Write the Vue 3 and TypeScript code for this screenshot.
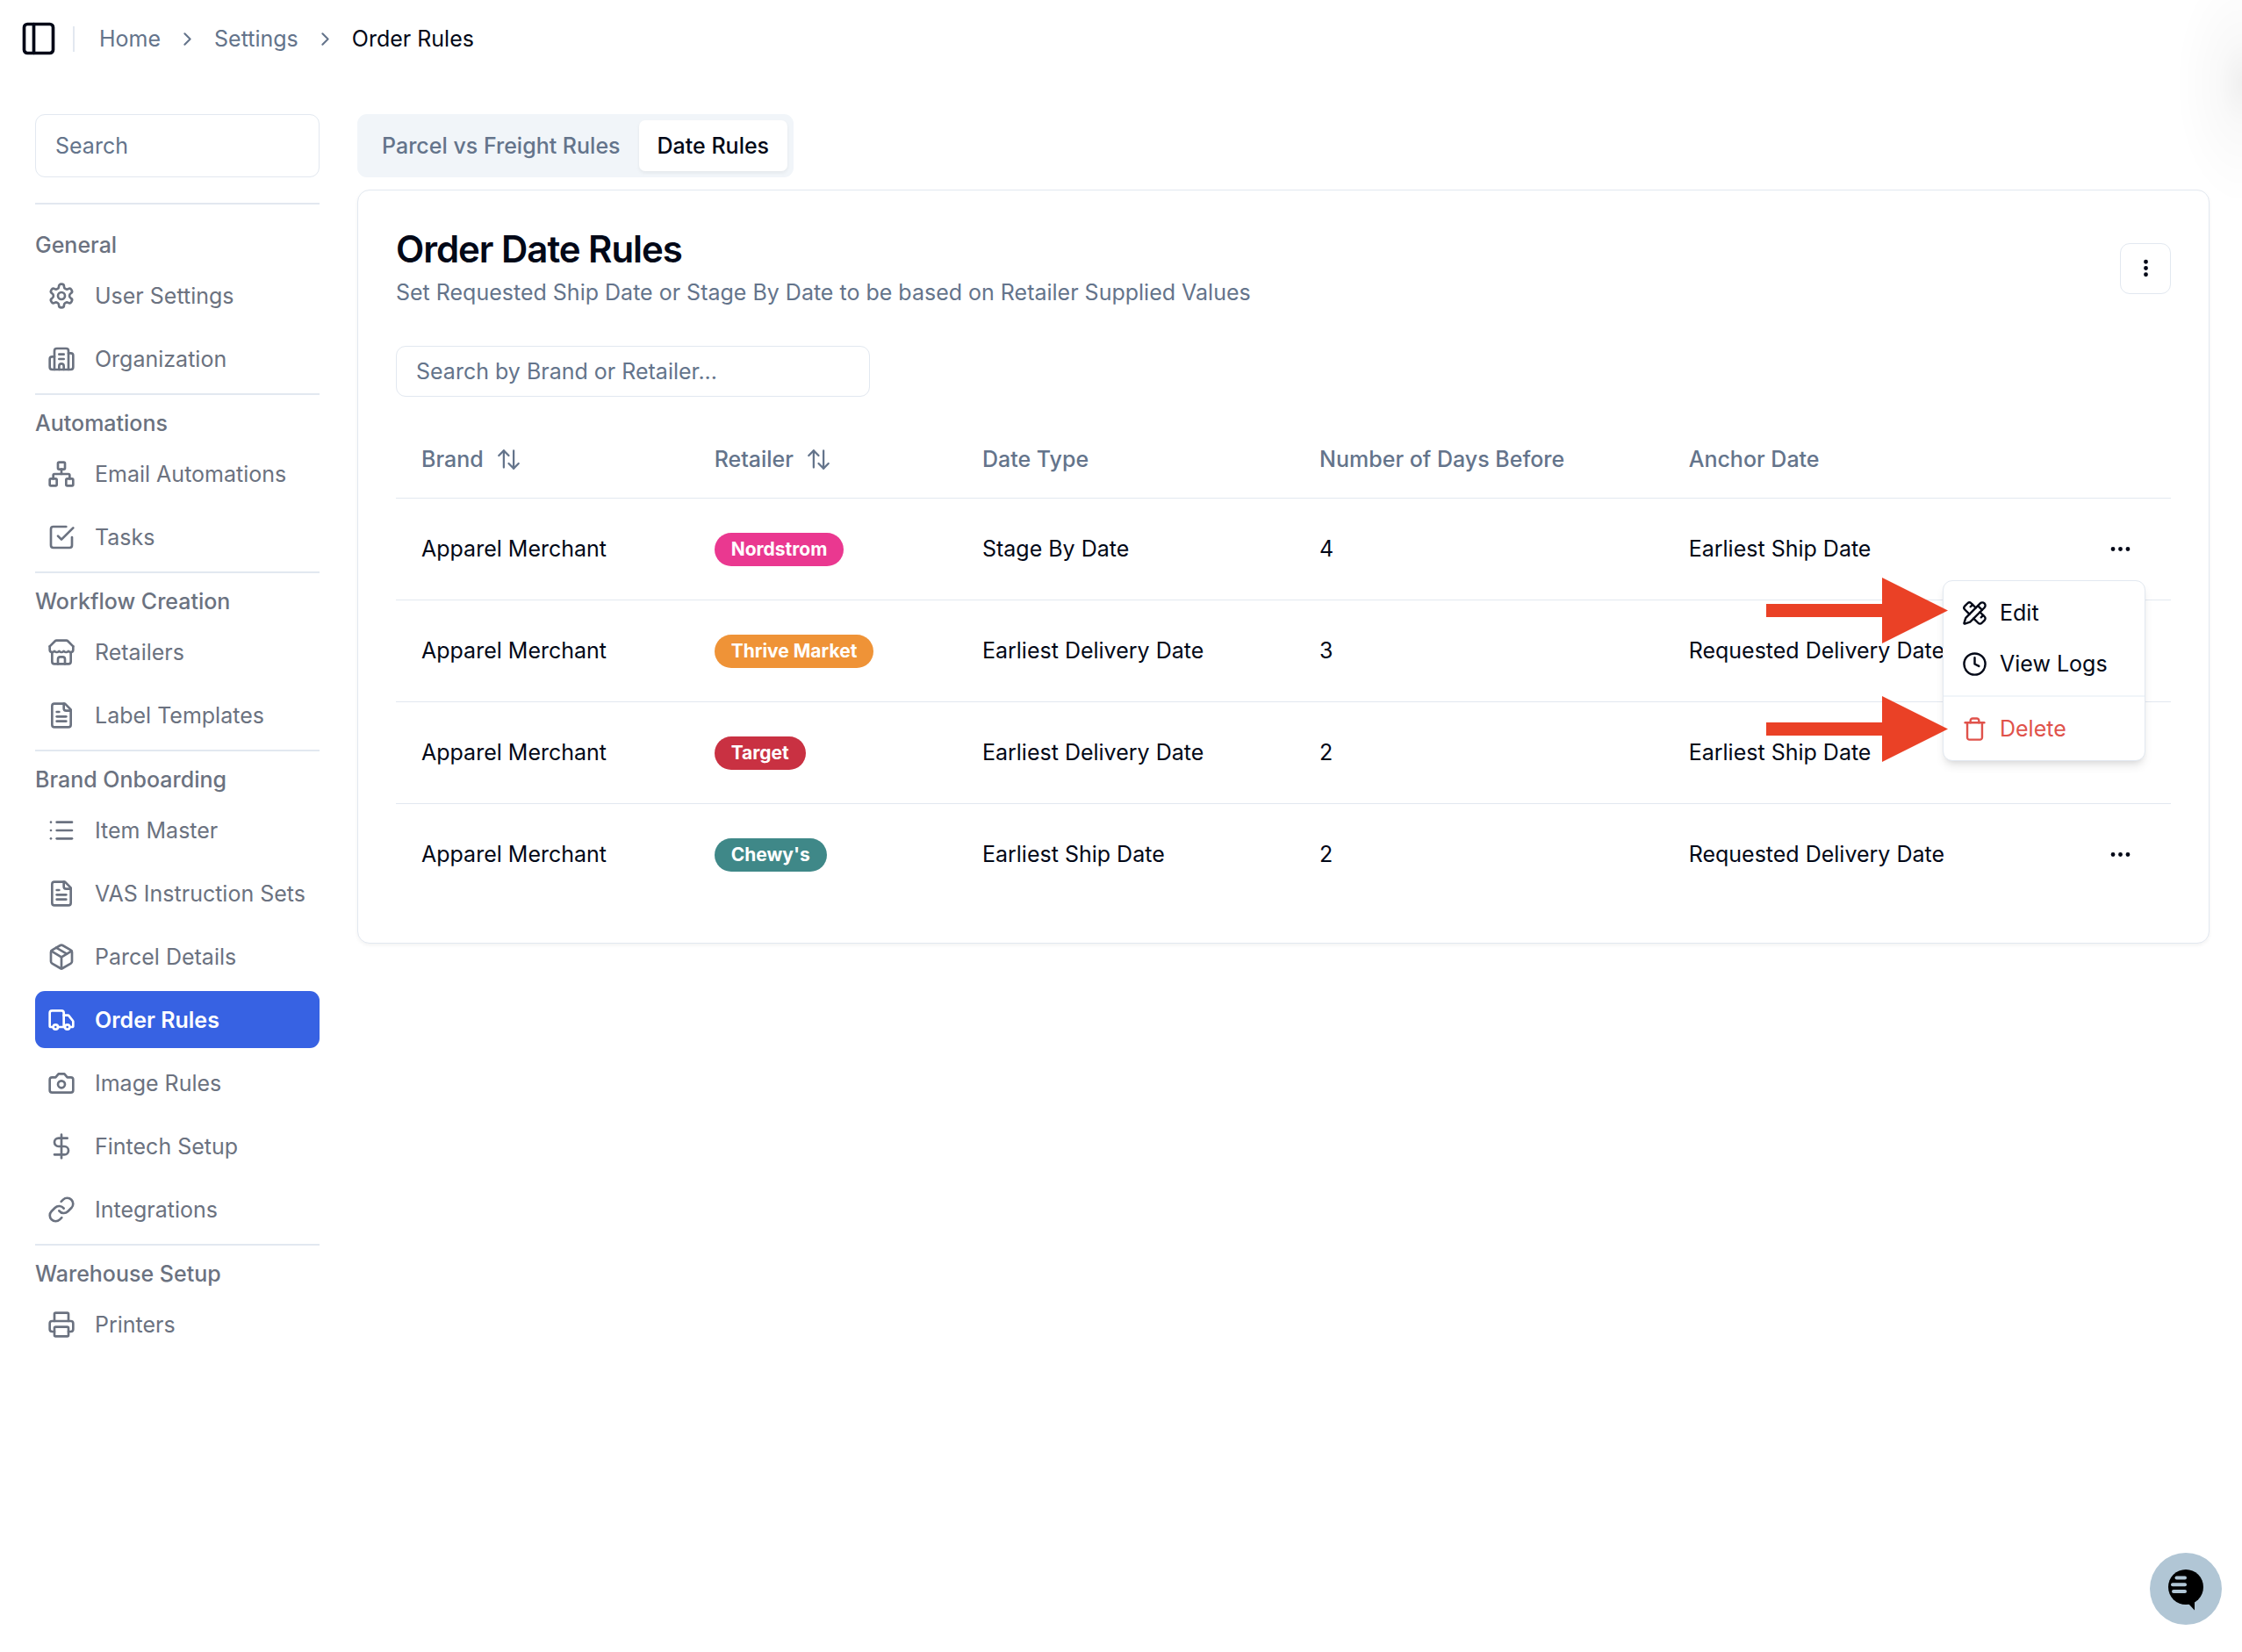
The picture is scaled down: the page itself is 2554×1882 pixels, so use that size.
<script setup lang="ts">
import { h, ref } from 'vue'

type Shape = { tag: 'path' | 'rect' | 'circle'; [attr: string]: string | number }
interface NavItem { label: string; icon: string; active?: boolean }
interface NavSection { title: string; items: NavItem[] }
interface Rule {
  brand: string
  retailer: string
  tone: string
  dateType: string
  days: number
  anchor: string
}

const p = (d: string): Shape => ({ tag: 'path', d })

const icons: Record<string, Shape[]> = {
  panel: [{ tag: 'rect', x: 3, y: 3, width: 18, height: 18, rx: 2 }, p('M9 3v18')],
  chevron: [p('m9 18 6-6-6-6')],
  settings: [
    p('M12.22 2h-.44a2 2 0 0 0-2 2v.18a2 2 0 0 1-1 1.73l-.43.25a2 2 0 0 1-2 0l-.15-.08a2 2 0 0 0-2.73.73l-.22.38a2 2 0 0 0 .73 2.73l.15.1a2 2 0 0 1 1 1.72v.51a2 2 0 0 1-1 1.74l-.15.09a2 2 0 0 0-.73 2.73l.22.38a2 2 0 0 0 2.73.73l.15-.08a2 2 0 0 1 2 0l.43.25a2 2 0 0 1 1 1.73V20a2 2 0 0 0 2 2h.44a2 2 0 0 0 2-2v-.18a2 2 0 0 1 1-1.73l.43-.25a2 2 0 0 1 2 0l.15.08a2 2 0 0 0 2.73-.73l.22-.39a2 2 0 0 0-.73-2.73l-.15-.08a2 2 0 0 1-1-1.74v-.5a2 2 0 0 1 1-1.74l.15-.09a2 2 0 0 0 .73-2.73l-.22-.38a2 2 0 0 0-2.73-.73l-.15.08a2 2 0 0 1-2 0l-.43-.25a2 2 0 0 1-1-1.73V4a2 2 0 0 0-2-2z'),
    { tag: 'circle', cx: 12, cy: 12, r: 3 },
  ],
  building: [
    p('M10 12h4'), p('M10 8h4'), p('M14 21v-3a2 2 0 0 0-4 0v3'),
    p('M6 10H4a2 2 0 0 0-2 2v7a2 2 0 0 0 2 2h16a2 2 0 0 0 2-2V9a2 2 0 0 0-2-2h-2'),
    p('M6 21V5a2 2 0 0 1 2-2h8a2 2 0 0 1 2 2v16'),
  ],
  network: [
    { tag: 'rect', x: 16, y: 16, width: 6, height: 6, rx: 1 },
    { tag: 'rect', x: 2, y: 16, width: 6, height: 6, rx: 1 },
    { tag: 'rect', x: 9, y: 2, width: 6, height: 6, rx: 1 },
    p('M5 16v-3a1 1 0 0 1 1-1h12a1 1 0 0 1 1 1v3'), p('M12 12V8'),
  ],
  tasks: [p('m9 11 3 3L22 4'), p('M21 12v7a2 2 0 0 1-2 2H5a2 2 0 0 1-2-2V5a2 2 0 0 1 2-2h11')],
  store: [
    p('m2 7 4.41-4.41A2 2 0 0 1 7.83 2h8.34a2 2 0 0 1 1.42.59L22 7'),
    p('M4 12v8a2 2 0 0 0 2 2h12a2 2 0 0 0 2-2v-8'),
    p('M15 22v-4a2 2 0 0 0-2-2h-2a2 2 0 0 0-2 2v4'),
    p('M2 7v3a2 2 0 0 0 2 2a2.7 2.7 0 0 0 1.59-.63.7.7 0 0 1 .82 0A2.7 2.7 0 0 0 8 12a2.7 2.7 0 0 0 1.59-.63.7.7 0 0 1 .82 0A2.7 2.7 0 0 0 12 12a2.7 2.7 0 0 0 1.59-.63.7.7 0 0 1 .82 0A2.7 2.7 0 0 0 16 12a2.7 2.7 0 0 0 1.59-.63.7.7 0 0 1 .82 0A2.7 2.7 0 0 0 20 12a2 2 0 0 0 2-2V7'),
  ],
  file: [
    p('M15 2H6a2 2 0 0 0-2 2v16a2 2 0 0 0 2 2h12a2 2 0 0 0 2-2V7Z'),
    p('M14 2v4a2 2 0 0 0 2 2h4'), p('M10 9H8'), p('M16 13H8'), p('M16 17H8'),
  ],
  list: [p('M3 12h.01'), p('M3 19h.01'), p('M3 5h.01'), p('M8 12h13'), p('M8 19h13'), p('M8 5h13')],
  box: [
    p('M11 21.73a2 2 0 0 0 2 0l7-4A2 2 0 0 0 21 16V8a2 2 0 0 0-1-1.73l-7-4a2 2 0 0 0-2 0l-7 4A2 2 0 0 0 3 8v8a2 2 0 0 0 1 1.73z'),
    p('M12 22V12'), p('m3.3 7 7.703 4.734a2 2 0 0 0 1.994 0L20.7 7'), p('m7.5 4.27 9 5.15'),
  ],
  truck: [
    p('M14 18V6a2 2 0 0 0-2-2H4a2 2 0 0 0-2 2v11a1 1 0 0 0 1 1h2'), p('M15 18H9'),
    p('M19 18h2a1 1 0 0 0 1-1v-3.65a1 1 0 0 0-.22-.624l-3.48-4.35A1 1 0 0 0 17.52 8H14'),
    { tag: 'circle', cx: 17, cy: 18, r: 2 }, { tag: 'circle', cx: 7, cy: 18, r: 2 },
  ],
  camera: [
    p('M14.5 4h-5L7 7H4a2 2 0 0 0-2 2v9a2 2 0 0 0 2 2h16a2 2 0 0 0 2-2V9a2 2 0 0 0-2-2h-3l-2.5-3z'),
    { tag: 'circle', cx: 12, cy: 13, r: 3 },
  ],
  dollar: [p('M12 2v20'), p('M17 5H9.5a3.5 3.5 0 0 0 0 7h5a3.5 3.5 0 0 1 0 7H6')],
  link: [
    p('M10 13a5 5 0 0 0 7.54.54l3-3a5 5 0 0 0-7.07-7.07l-1.72 1.71'),
    p('M14 11a5 5 0 0 0-7.54-.54l-3 3a5 5 0 0 0 7.07 7.07l1.71-1.71'),
  ],
  printer: [
    p('M6 18H4a2 2 0 0 1-2-2v-5a2 2 0 0 1 2-2h16a2 2 0 0 1 2 2v5a2 2 0 0 1-2 2h-2'),
    p('M6 9V3a1 1 0 0 1 1-1h10a1 1 0 0 1 1 1v6'),
    { tag: 'rect', x: 6, y: 14, width: 12, height: 8, rx: 1 },
  ],
  sort: [p('m2 8 5-5 5 5'), p('M7 3v17'), p('m22 16-5 5-5-5'), p('M17 21V3')],
  dots: [
    { tag: 'circle', cx: 12, cy: 12, r: 1 }, { tag: 'circle', cx: 19, cy: 12, r: 1 },
    { tag: 'circle', cx: 5, cy: 12, r: 1 },
  ],
  dotsVertical: [
    { tag: 'circle', cx: 12, cy: 12, r: 1 }, { tag: 'circle', cx: 12, cy: 6, r: 1 },
    { tag: 'circle', cx: 12, cy: 18, r: 1 },
  ],
  edit: [
    p('M13 7 8.7 2.7a2.41 2.41 0 0 0-3.4 0L2.7 5.3a2.41 2.41 0 0 0 0 3.4L7 13'), p('m8 6 2-2'), p('m18 16 2-2'),
    p('m17 11 4.3 4.3c.94.94.94 2.46 0 3.4l-2.6 2.6c-.94.94-2.46.94-3.4 0L11 17'),
    p('M21.174 6.812a1 1 0 0 0-3.986-3.987L3.842 16.174a2 2 0 0 0-.5.83l-1.321 4.352a.5.5 0 0 0 .623.622l4.353-1.32a2 2 0 0 0 .83-.497z'),
    p('m15 5 4 4'),
  ],
  clock: [{ tag: 'circle', cx: 12, cy: 12, r: 10 }, p('M12 6v6l4 2')],
  trash: [p('M3 6h18'), p('M19 6v14c0 1-1 2-2 2H7c-1 0-2-1-2-2V6'), p('M8 6V4c0-1 1-2 2-2h4c1 0 2 1 2 2v2')],
}

const Icon = (props: { name: string }) =>
  h(
    'svg',
    { class: 'icon', viewBox: '0 0 24 24', 'aria-hidden': 'true' },
    icons[props.name].map(({ tag, ...attrs }) => h(tag, attrs)),
  )
Icon.props = ['name']

const sections: NavSection[] = [
  { title: 'General', items: [{ label: 'User Settings', icon: 'settings' }, { label: 'Organization', icon: 'building' }] },
  { title: 'Automations', items: [{ label: 'Email Automations', icon: 'network' }, { label: 'Tasks', icon: 'tasks' }] },
  { title: 'Workflow Creation', items: [{ label: 'Retailers', icon: 'store' }, { label: 'Label Templates', icon: 'file' }] },
  {
    title: 'Brand Onboarding',
    items: [
      { label: 'Item Master', icon: 'list' },
      { label: 'VAS Instruction Sets', icon: 'file' },
      { label: 'Parcel Details', icon: 'box' },
      { label: 'Order Rules', icon: 'truck', active: true },
      { label: 'Image Rules', icon: 'camera' },
      { label: 'Fintech Setup', icon: 'dollar' },
      { label: 'Integrations', icon: 'link' },
    ],
  },
  { title: 'Warehouse Setup', items: [{ label: 'Printers', icon: 'printer' }] },
]

const rules: Rule[] = [
  { brand: 'Apparel Merchant', retailer: 'Nordstrom', tone: 'pink', dateType: 'Stage By Date', days: 4, anchor: 'Earliest Ship Date' },
  { brand: 'Apparel Merchant', retailer: 'Thrive Market', tone: 'orange', dateType: 'Earliest Delivery Date', days: 3, anchor: 'Requested Delivery Date' },
  { brand: 'Apparel Merchant', retailer: 'Target', tone: 'red', dateType: 'Earliest Delivery Date', days: 2, anchor: 'Earliest Ship Date' },
  { brand: 'Apparel Merchant', retailer: "Chewy's", tone: 'teal', dateType: 'Earliest Ship Date', days: 2, anchor: 'Requested Delivery Date' },
]

const navQuery = ref('')
const ruleQuery = ref('')
const openRow = ref(0)
const toggle = (i: number) => { openRow.value = openRow.value === i ? -1 : i }
</script>

<template>
  <div class="page">
    <header class="topbar">
      <button type="button" aria-label="Toggle sidebar"><Icon name="panel" class="icon-lg" /></button>
      <span class="bar-rule"></span>
      <nav class="crumbs" aria-label="Breadcrumb">
        <a href="#">Home</a>
        <Icon name="chevron" class="icon-sm" />
        <a href="#">Settings</a>
        <Icon name="chevron" class="icon-sm" />
        <span class="current" aria-current="page">Order Rules</span>
      </nav>
    </header>

    <div class="layout">
      <aside class="sidebar">
        <input v-model="navQuery" class="field field-tall" type="text" placeholder="Search" aria-label="Search settings" />
        <hr class="side-rule" />
        <nav aria-label="Settings">
          <section v-for="section in sections" :key="section.title" class="side-section">
            <h2 class="side-title">{{ section.title }}</h2>
            <a v-for="item in section.items" :key="item.label" href="#" class="side-item" :class="{ active: item.active }">
              <Icon :name="item.icon" class="icon-nav" />
              <span>{{ item.label }}</span>
            </a>
          </section>
        </nav>
      </aside>

      <main class="main">
        <div class="tabs" role="tablist">
          <button type="button" role="tab" class="tab" aria-selected="false">Parcel vs Freight Rules</button>
          <button type="button" role="tab" class="tab selected" aria-selected="true">Date Rules</button>
        </div>

        <section class="card">
          <div class="card-head">
            <div>
              <h1 class="title">Order Date Rules</h1>
              <p class="subtitle">Set Requested Ship Date or Stage By Date to be based on Retailer Supplied Values</p>
            </div>
            <button class="outline-button" type="button" aria-label="More options"><Icon name="dotsVertical" class="icon-md" /></button>
          </div>

          <input v-model="ruleQuery" class="field rule-search" type="text" placeholder="Search by Brand or Retailer..." aria-label="Search by brand or retailer" />

          <table class="rules">
            <colgroup>
              <col class="c-brand" /><col class="c-retailer" /><col class="c-type" /><col class="c-days" /><col /><col class="c-actions" />
            </colgroup>
            <thead>
              <tr>
                <th v-for="name in ['Brand', 'Retailer']" :key="name" scope="col">
                  <button type="button" class="sort">{{ name }}<Icon name="sort" class="icon-sort" /></button>
                </th>
                <th scope="col">Date Type</th>
                <th scope="col">Number of Days Before</th>
                <th scope="col">Anchor Date</th>
                <th scope="col" aria-label="Actions"></th>
              </tr>
            </thead>
            <tbody>
              <tr v-for="(rule, r) in rules" :key="r">
                <td>{{ rule.brand }}</td>
                <td><span class="badge" :class="rule.tone">{{ rule.retailer }}</span></td>
                <td>{{ rule.dateType }}</td>
                <td>{{ rule.days }}</td>
                <td>{{ rule.anchor }}</td>
                <td>
                  <div class="action-box">
                    <button class="dots" type="button" aria-label="Row actions" :aria-expanded="openRow === r" @click="toggle(r)">
                      <Icon name="dots" class="icon-md" />
                    </button>
                    <div v-if="openRow === r" class="menu" role="menu">
                      <button type="button" role="menuitem" class="menu-item"><Icon name="edit" class="icon-md" />Edit</button>
                      <button type="button" role="menuitem" class="menu-item"><Icon name="clock" class="icon-md" />View Logs</button>
                      <div class="menu-rule" role="separator"></div>
                      <button type="button" role="menuitem" class="menu-item danger"><Icon name="trash" class="icon-md" />Delete</button>
                      <div class="pointers" aria-hidden="true">
                        <svg v-for="n in 2" :key="n" class="pointer" viewBox="0 0 207 75"><path d="M0 30H132V0L207 37.500L132 75V45H0Z" /></svg>
                      </div>
                    </div>
                  </div>
                </td>
              </tr>
            </tbody>
          </table>
        </section>
      </main>
    </div>

    <div class="edge-glow" aria-hidden="true"></div>

    <button class="chat" type="button" aria-label="Open chat">
      <svg viewBox="0 0 82 82">
        <circle cx="41" cy="39" r="20" fill="#000" />
        <path d="M44 58L51 65.500V54Z" fill="#000" />
        <rect x="28.500" y="26.500" width="13.500" height="4" rx="2" fill="#b1c6d5" />
        <rect x="24" y="34.200" width="18" height="4" rx="2" fill="#b1c6d5" />
        <rect x="25" y="42" width="17" height="4" rx="2" fill="#b1c6d5" />
      </svg>
    </button>
  </div>
</template>

<style>
body {
  margin: 0;
  background: #fff;
}
</style>

<style scoped>
.page {
  --ink: #020817;
  --muted: #64748b;
  --gray: #6b7280;
  --line: #e2e8f0;
  font-family: Inter, "Liberation Sans", sans-serif;
  font-size: 25px;
  line-height: 36px;
  color: var(--ink);
}
.page * {
  box-sizing: border-box;
}
button,
input {
  font: inherit;
  color: inherit;
}
button {
  margin: 0;
  padding: 0;
  border: 0;
  background: none;
  cursor: pointer;
}
a {
  color: inherit;
  text-decoration: none;
}
.icon {
  display: block;
  flex: none;
  fill: none;
  stroke: currentColor;
  stroke-width: 2;
  stroke-linecap: round;
  stroke-linejoin: round;
}
.icon-sm { width: 25px; height: 25px; }
.icon-sort { width: 27px; height: 27px; }
.icon-md { width: 29px; height: 29px; }
.icon-nav { width: 32px; height: 32px; }
.icon-lg { width: 44px; height: 44px; }

/* soft shadow spilling in from the right edge */
.edge-glow {
  position: fixed;
  top: -45px;
  right: 0;
  width: 76px;
  height: 280px;
  pointer-events: none;
  background: radial-gradient(ellipse 100% 50% at 100% 50%, rgba(0, 0, 0, 0.06), rgba(0, 0, 0, 0.025) 35%, rgba(0, 0, 0, 0.006) 75%, rgba(0, 0, 0, 0));
}

.topbar {
  display: flex;
  align-items: center;
  height: 88px;
  padding: 0 22px;
}
.bar-rule {
  width: 2px;
  height: 29px;
  margin: 0 28px 0 17px;
  background: var(--line);
}
.crumbs {
  display: flex;
  align-items: center;
  gap: 18px;
  color: var(--muted);
}
.current { color: var(--ink); }

.layout {
  display: flex;
  align-items: flex-start;
  gap: 43px;
  padding: 42px 37px 43px 40px;
}
.sidebar {
  flex: none;
  width: 324px;
  color: var(--gray);
}
.field {
  display: block;
  width: 100%;
  height: 58px;
  padding: 0 22px;
  border: 1px solid var(--line);
  border-radius: 11px;
  background: #fff;
  color: var(--ink);
  outline: none;
}
.field::placeholder {
  color: var(--muted);
  opacity: 1;
}
.field-tall { height: 72px; }
.side-rule {
  height: 2px;
  margin: 29px 0 12px;
  border: 0;
  background: var(--line);
}
.side-section {
  display: flex;
  flex-direction: column;
  gap: 7px;
  padding: 14px 0 7px;
  border-top: 2px solid var(--line);
}
.side-section:first-child { border-top-color: transparent; }
.side-title {
  margin: 0;
  font-size: 25px;
  line-height: 36px;
  font-weight: 500;
}
.side-item {
  display: flex;
  align-items: center;
  gap: 22px;
  height: 65px;
  padding: 0 14px;
  border-radius: 11px;
  white-space: nowrap;
}
.side-item.active {
  background: #3762e3;
  color: #fff;
  font-weight: 600;
}

.main {
  flex: 1;
  min-width: 0;
}
.tabs {
  display: inline-flex;
  height: 72px;
  padding: 7px;
  border-radius: 11px;
  background: #f1f5f9;
  vertical-align: top;
}
.tab {
  padding: 0 21px;
  border-radius: 7px;
  font-weight: 500;
  color: var(--muted);
}
.tab.selected {
  background: #fff;
  color: var(--ink);
  box-shadow: 0 2px 4px rgba(0, 0, 0, 0.06);
}
.card {
  margin-top: 14px;
  padding: 43px;
  border: 1px solid var(--line);
  border-radius: 14px;
  background: #fff;
  box-shadow: 0 2px 4px rgba(0, 0, 0, 0.05);
}
.card-head {
  display: flex;
  align-items: center;
  justify-content: space-between;
}
.title {
  margin: 0;
  font-size: 42px;
  line-height: 47px;
  font-weight: 600;
  letter-spacing: -0.025em;
}
.subtitle {
  margin: 8px 0 0;
  color: var(--muted);
}
.outline-button {
  display: grid;
  place-items: center;
  width: 58px;
  height: 58px;
  border: 1px solid var(--line);
  border-radius: 11px;
}
.rule-search {
  max-width: 540px;
  margin: 43px 0 28px;
}
.rules {
  width: 100%;
  table-layout: fixed;
  border-collapse: collapse;
}
.c-brand { width: 16.5%; }
.c-retailer { width: 15.1%; }
.c-type { width: 19%; }
.c-days { width: 20.8%; }
.c-actions { width: 116px; }
.rules th {
  height: 87px;
  padding: 0 29px;
  text-align: left;
  font-weight: 500;
  color: var(--muted);
}
.rules tr { border-bottom: 1px solid var(--line); }
.rules tbody tr:last-child { border-bottom: 0; }
.rules td {
  height: 116px;
  padding: 0 29px;
  white-space: nowrap;
}
.sort {
  display: flex;
  align-items: center;
  gap: 15px;
}
.badge {
  display: inline-block;
  padding: 4px 19px;
  border-radius: 19px;
  font-size: 21px;
  line-height: 30px;
  font-weight: 700;
  color: #fff;
  vertical-align: middle;
}
.pink { background: #ea3890; }
.orange { background: #ef9337; }
.red { background: #c93142; }
.teal { background: #3f8888; }
.action-box { position: relative; }
.dots {
  display: grid;
  place-items: center;
  width: 58px;
  height: 58px;
}
.menu {
  position: absolute;
  top: 100%;
  right: 0;
  z-index: 2;
  width: 231px;
  margin-top: 7px;
  padding: 7px;
  border: 1px solid var(--line);
  border-radius: 11px;
  background: #fff;
  box-shadow: 0 7px 11px -2px rgba(0, 0, 0, 0.1), 0 4px 7px -4px rgba(0, 0, 0, 0.1);
}
.menu-item {
  display: flex;
  align-items: center;
  gap: 14px;
  width: 100%;
  height: 58px;
  padding: 0 14px;
}
.menu-item.danger { color: #e0524b; }
.menu-rule {
  height: 2px;
  margin: 7px -7px;
  background: #f1f5f9;
}
.pointers {
  position: absolute;
  top: -4px;
  right: calc(100% - 5px);
  display: flex;
  flex-direction: column;
  gap: 60px;
}
.pointer {
  display: block;
  width: 207px;
  height: 75px;
  fill: #ea4126;
}

.chat {
  position: fixed;
  right: 23px;
  bottom: 31px;
  width: 82px;
  height: 82px;
  border-radius: 50%;
  background: #b1c6d5;
}
.chat svg {
  display: block;
  width: 82px;
  height: 82px;
}
</style>
